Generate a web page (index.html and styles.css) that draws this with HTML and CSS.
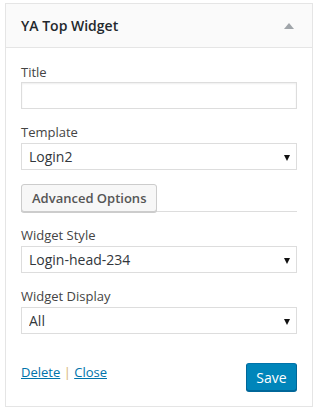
FILE: index.html
```html
<!DOCTYPE html>
<html lang="en">
<head>
    <meta charset="UTF-8">
    <meta name="viewport" content="width=device-width, initial-scale=1.0">
    <title>YA Top Widget</title>
    <link rel="stylesheet" href="styles.css">
</head>
<body>
    <div class="widget">
        <div class="widget-top">
            <h3>YA Top Widget</h3>
            <span class="toggle"></span>
        </div>

        <form class="widget-inside">
            <p class="field">
                <label for="title">Title</label>
                <input type="text" id="title" class="wide">
            </p>

            <p class="field">
                <label for="template">Template</label>
                <span class="select-wrap">
                    <select id="template" class="wide">
                        <option>Login2</option>
                    </select>
                </span>
            </p>

            <div class="advanced">
                <button type="button" class="button">Advanced Options</button>
            </div>

            <p class="field">
                <label for="style">Widget Style</label>
                <span class="select-wrap">
                    <select id="style" class="wide">
                        <option>Login-head-234</option>
                    </select>
                </span>
            </p>

            <p class="field">
                <label for="display">Widget Display</label>
                <span class="select-wrap">
                    <select id="display" class="wide">
                        <option>All</option>
                    </select>
                </span>
            </p>

            <div class="widget-control-actions">
                <div class="links">
                    <a href="#">Delete</a> <span class="sep">|</span> <a href="#">Close</a>
                </div>
                <button type="button" class="button button-primary">Save</button>
            </div>
        </form>
    </div>
</body>
</html>
```

FILE: styles.css
```css
* {
    margin: 0;
    padding: 0;
    box-sizing: border-box;
}

body {
    background-color: #fff;
    font-family: "Open Sans", "Liberation Sans", sans-serif;
    font-size: 13px;
    color: #444;
}

.widget {
    margin: 3px 4px 0 5px;
    border: 1px solid #e5e5e5;
    background-color: #fff;
}

.widget-top {
    height: 44px;
    padding: 0 15px;
    background-color: #fafafa;
    border-bottom: 1px solid #e5e5e5;
    display: flex;
    align-items: center;
    justify-content: space-between;
}

.widget-top h3 {
    font-size: 14px;
    font-weight: 600;
    color: #23282d;
}

.toggle {
    width: 0;
    height: 0;
    margin-right: 3px;
    border-left: 5px solid transparent;
    border-right: 5px solid transparent;
    border-bottom: 6px solid #a0a5aa;
}

.widget-inside {
    padding: 15px 15px 15px;
}

.field {
    margin-bottom: 14px;
}

.field label {
    display: block;
    line-height: 18px;
    margin-bottom: 1px;
}

.wide {
    display: block;
    width: 100%;
    height: 27px;
    border: 1px solid #ddd;
    box-shadow: inset 0 1px 2px rgba(0, 0, 0, 0.07);
    background-color: #fff;
    font-family: inherit;
    font-size: 14px;
    color: #32373c;
    padding: 0 7px;
}

select.wide {
    appearance: none;
    -webkit-appearance: none;
    border-radius: 0;
    box-shadow: none;
    margin-top: 2px;
}

.select-wrap {
    display: block;
    position: relative;
}

.select-wrap::after {
    content: "";
    position: absolute;
    right: 7px;
    top: 12px;
    border-left: 3px solid transparent;
    border-right: 3px solid transparent;
    border-top: 6px solid #111;
}

.advanced {
    display: flex;
    border-bottom: 1px solid #ddd;
    margin-bottom: 14px;
}

.button {
    height: 28px;
    padding: 0 10px;
    font-family: inherit;
    font-size: 13px;
    font-weight: 600;
    color: #555;
    background-color: #f7f7f7;
    border: 1px solid #ccc;
    border-radius: 3px;
    box-shadow: 0 1px 0 #ccc;
    cursor: pointer;
}

.advanced .button {
    margin-bottom: -1px;
}

.widget-control-actions {
    display: flex;
    justify-content: space-between;
    align-items: flex-start;
    margin-top: 29px;
}

.links {
    line-height: 18px;
}

.links a {
    color: #0073aa;
}

.sep {
    color: #d8b46a;
}

.button-primary {
    width: 51px;
    padding: 0;
    font-weight: 400;
    font-size: 14px;
    color: #fff;
    background-color: #0085ba;
    border-color: #0073aa #006799 #006799;
    box-shadow: 0 1px 0 #006799;
}
```
